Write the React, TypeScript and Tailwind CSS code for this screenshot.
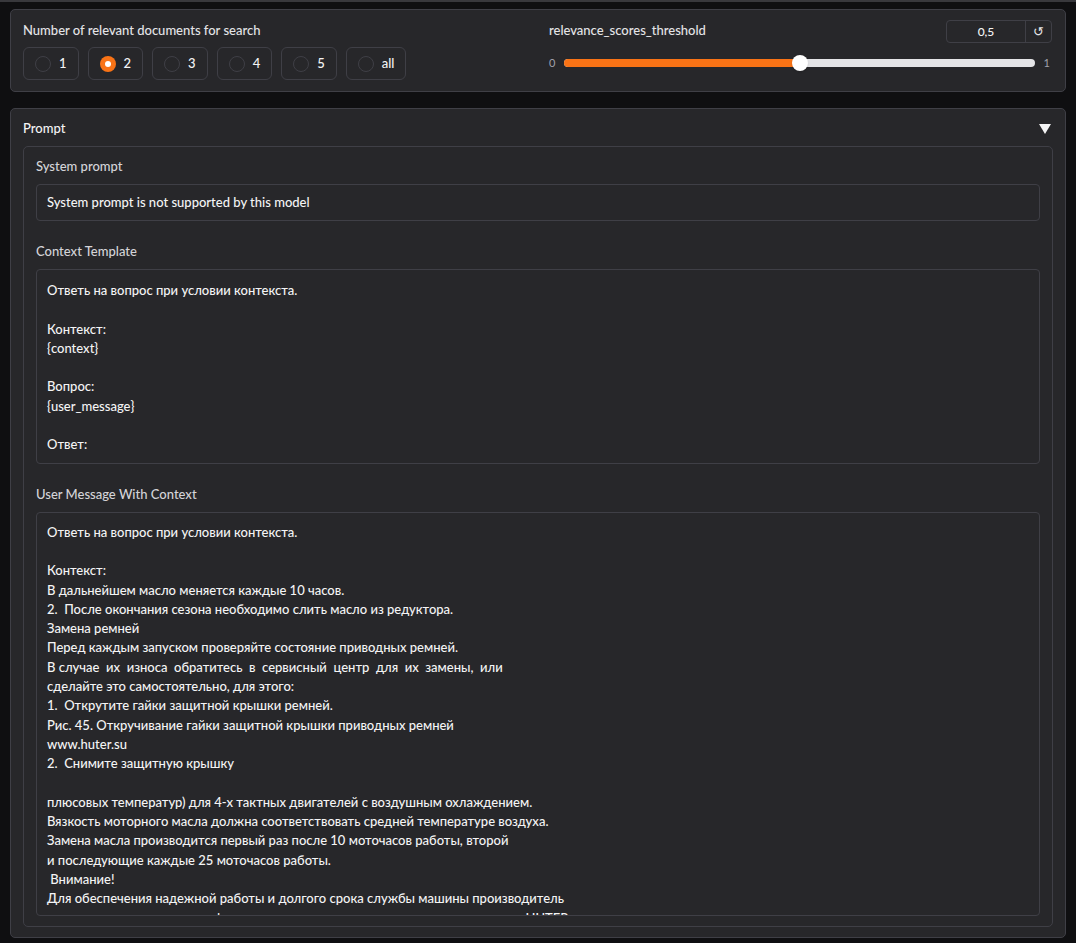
import { useState } from "react";

const contextTemplate = `Ответь на вопрос при условии контекста.

Контекст:
{context}

Вопрос:
{user_message}

Ответ:`;

const userMessage = `Ответь на вопрос при условии контекста.

Контекст:
В дальнейшем масло меняется каждые 10 часов.
2.  После окончания сезона необходимо слить масло из редуктора.
Замена ремней
Перед каждым запуском проверяйте состояние приводных ремней.
В случае  их  износа  обратитесь  в  сервисный  центр  для  их  замены,  или
сделайте это самостоятельно, для этого:
1.  Открутите гайки защитной крышки ремней.
Рис. 45. Откручивание гайки защитной крышки приводных ремней
www.huter.su
2.  Снимите защитную крышку

плюсовых температур) для 4-х тактных двигателей с воздушным охлаждением.
Вязкость моторного масла должна соответствовать средней температуре воздуха.
Замена масла производится первый раз после 10 моточасов работы, второй
и последующие каждые 25 моточасов работы.
 Внимание!
Для обеспечения надежной работы и долгого срока службы машины производитель
рекомендует использовать фирменное полусинтетическое всесезонное масло HUTER
для двигателей с воздушным охлаждением.`;

const options = ["1", "2", "3", "4", "5", "all"];

const Radio = ({ label, checked, onClick }: { label: string; checked: boolean; onClick: () => void }) => (
    <div
        onClick={onClick}
        className="flex items-center gap-2 h-[33px] px-[11px] border border-[#3f3f46] rounded-md cursor-pointer"
    >
        {checked ? (
            <span className="w-4 h-4 rounded-full bg-[#f97316] flex items-center justify-center">
                <span className="w-[6px] h-[6px] rounded-full bg-white" />
            </span>
        ) : (
            <span className="w-4 h-4 rounded-full border border-[#3f3f46]" />
        )}
        <span className="text-[13px] font-medium text-[#f4f4f5]">{label}</span>
    </div>
);

const Field = ({ label, children }: { label: string; children: React.ReactNode }) => (
    <div className="flex flex-col gap-[9px]">
        <div className="text-[13px] font-medium leading-[18px] text-[#d4d4d8]">{label}</div>
        {children}
    </div>
);

export default function App() {
    const [docs, setDocs] = useState("2");
    const value = 0.5;

    return (
        <div
            className="min-h-screen bg-[#0f0f11] border-t-2 border-[#38383c] px-[10px] pt-[7px] pb-[7px] flex flex-col gap-4"
            style={{ fontFamily: "Lato, 'Noto Sans', sans-serif" }}
        >
            {/* Top settings */}
            <div className="bg-[#27272a] border border-[#3f3f46] rounded-[5px] flex px-3 pt-[11px] pb-[11px]">
                <div className="w-[526px] flex flex-col gap-2">
                    <div className="text-[13px] font-medium leading-[18px] text-[#e4e4e7]">Number of relevant documents for search</div>
                    <div className="flex gap-[9px]">
                        {options.map((o) => (
                            <Radio key={o} label={o} checked={docs === o} onClick={() => setDocs(o)} />
                        ))}
                    </div>
                </div>
                <div className="flex-1 flex flex-col">
                    <div className="flex justify-between items-start">
                        <div className="text-[13px] font-medium leading-[18px] text-[#e4e4e7]">relevance_scores_threshold</div>
                        <div className="flex h-[23px] -mt-[1px] mr-[1px] border border-[#3f3f46] rounded">
                            <div className="w-[78px] flex items-center justify-center text-[12px] font-medium text-[#f4f4f5]">0,5</div>
                            <div className="w-[26px] border-l border-[#3f3f46] flex items-center justify-center text-[13px] text-[#e4e4e7]">
                                ↺
                            </div>
                        </div>
                    </div>
                    <div className="flex items-center gap-[9px] mt-[11px] h-[18px]">
                        <span className="text-[11px] text-[#a1a1aa]">0</span>
                        <div className="relative flex-1 h-2 rounded-full bg-[#e4e4e7]">
                            <div className="h-2 rounded-full bg-[#f97316]" style={{ width: `${value * 100}%` }} />
                            <div
                                className="absolute top-1/2 w-4 h-4 -mt-2 -ml-2 rounded-full bg-white shadow"
                                style={{ left: `${value * 100}%` }}
                            />
                        </div>
                        <span className="text-[11px] text-[#a1a1aa] mr-[3px]">1</span>
                    </div>
                </div>
            </div>

            {/* Prompt accordion */}
            <div className="bg-[#27272a] border border-[#3f3f46] rounded-[5px] px-3 pt-[11px] pb-[10px] flex flex-col gap-[8px]">
                <div className="flex justify-between items-center h-[18px]">
                    <span className="text-[13px] font-medium text-[#f4f4f5]">Prompt</span>
                    <svg width="12" height="10" viewBox="0 0 12 10" className="mr-[2px]">
                        <path d="M0 0 L12 0 L6 10 Z" fill="#f4f4f5" />
                    </svg>
                </div>
                <div className="border border-[#3f3f46] rounded-[5px] px-3 pt-[10px] pb-[10px] flex flex-col gap-[21px]">
                    <Field label="System prompt">
                        <div className="h-[37px] flex items-center border border-[#3f3f46] rounded px-[10px] text-[13px] font-medium text-[#f4f4f5]">
                            System prompt is not supported by this model
                        </div>
                    </Field>
                    <Field label="Context Template">
                        <div className="border border-[#3f3f46] rounded px-[10px] pt-[11px] pb-[8px] text-[13px] font-medium leading-[19.3px] text-[#f4f4f5] whitespace-pre-wrap">
                            {contextTemplate}
                        </div>
                    </Field>
                    <Field label="User Message With Context">
                        <div className="h-[404px] overflow-hidden border border-[#3f3f46] rounded px-[10px] pt-[10px] pb-[9px] text-[13px] font-medium leading-[19.3px] text-[#f4f4f5] whitespace-pre-wrap">
                            {userMessage}
                        </div>
                    </Field>
                </div>
            </div>
        </div>
    );
}
